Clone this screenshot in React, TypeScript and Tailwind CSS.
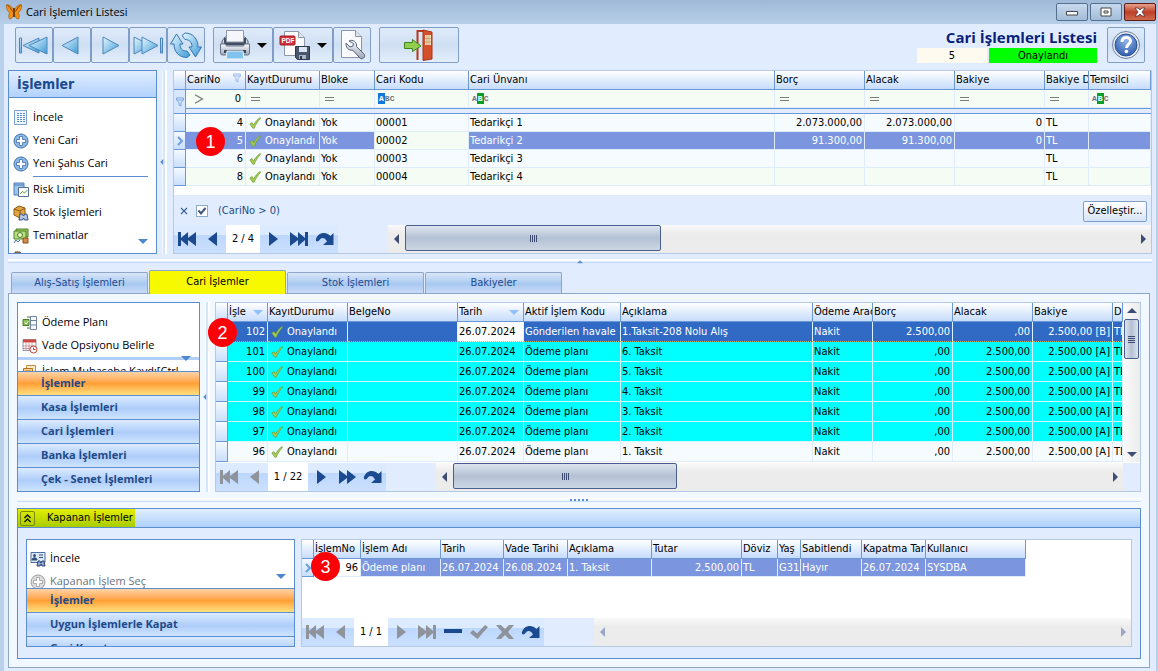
import { ReactNode, useState } from 'react';
import clsx from 'clsx';

type Align = 'left' | 'right';

interface Column {
  title: string;
  width: string;
  align?: Align;
  mark?: 'sort' | 'filter';
}

/* ---------- data ---------- */

const accountColumns: Column[] = [
  { title: 'CariNo', width: 'w-[60px]', align: 'right', mark: 'filter' },
  { title: 'KayıtDurumu', width: 'w-[74px]' },
  { title: 'Bloke', width: 'w-[55px]' },
  { title: 'Cari Kodu', width: 'w-[94px]' },
  { title: 'Cari Ünvanı', width: 'w-auto' },
  { title: 'Borç', width: 'w-[90px]', align: 'right' },
  { title: 'Alacak', width: 'w-[90px]', align: 'right' },
  { title: 'Bakiye', width: 'w-[90px]', align: 'right' },
  { title: 'Bakiye D', width: 'w-[44px]' },
  { title: 'Temsilci', width: 'w-[62px]' },
];

const accounts = [
  ['4', 'Onaylandı', 'Yok', '00001', 'Tedarikçi 1', '2.073.000,00', '2.073.000,00', '0', 'TL', ''],
  ['5', 'Onaylandı', 'Yok', '00002', 'Tedarikçi 2', '91.300,00', '91.300,00', '0', 'TL', ''],
  ['6', 'Onaylandı', 'Yok', '00003', 'Tedarikçi 3', '', '', '', 'TL', ''],
  ['8', 'Onaylandı', 'Yok', '00004', 'Tedarikçi 4', '', '', '', 'TL', ''],
];

const entryColumns: Column[] = [
  { title: 'İşle', width: 'w-10', align: 'right', mark: 'sort' },
  { title: 'KayıtDurumu', width: 'w-20' },
  { title: 'BelgeNo', width: 'w-[110px]' },
  { title: 'Tarih', width: 'w-[66px]', mark: 'sort' },
  { title: 'Aktif İşlem Kodu', width: 'w-[97px]' },
  { title: 'Açıklama', width: 'w-auto' },
  { title: 'Ödeme Arac', width: 'w-[60px]' },
  { title: 'Borç', width: 'w-20', align: 'right' },
  { title: 'Alacak', width: 'w-20', align: 'right' },
  { title: 'Bakiye', width: 'w-20', align: 'right' },
  { title: 'D', width: 'w-2.5' },
];

const entries = [
  ['102', 'Onaylandı', '', '26.07.2024', 'Gönderilen havale', '1.Taksit-208 Nolu Alış', 'Nakit', '2.500,00', ',00', '2.500,00 [B]', 'TL'],
  ['101', 'Onaylandı', '', '26.07.2024', 'Ödeme planı', '6. Taksit', 'Nakit', ',00', '2.500,00', '2.500,00 [A]', 'TL'],
  ['100', 'Onaylandı', '', '26.07.2024', 'Ödeme planı', '5. Taksit', 'Nakit', ',00', '2.500,00', '2.500,00 [A]', 'TL'],
  ['99', 'Onaylandı', '', '26.07.2024', 'Ödeme planı', '4. Taksit', 'Nakit', ',00', '2.500,00', '2.500,00 [A]', 'TL'],
  ['98', 'Onaylandı', '', '26.07.2024', 'Ödeme planı', '3. Taksit', 'Nakit', ',00', '2.500,00', '2.500,00 [A]', 'TL'],
  ['97', 'Onaylandı', '', '26.07.2024', 'Ödeme planı', '2. Taksit', 'Nakit', ',00', '2.500,00', '2.500,00 [A]', 'TL'],
  ['96', 'Onaylandı', '', '26.07.2024', 'Ödeme planı', '1. Taksit', 'Nakit', ',00', '2.500,00', '2.500,00 [A]', 'TL'],
];

const closedColumns: Column[] = [
  { title: 'İşlemNo', width: 'w-[47px]', align: 'right' },
  { title: 'İşlem Adı', width: 'w-20' },
  { title: 'Tarih', width: 'w-[63px]' },
  { title: 'Vade Tarihi', width: 'w-16' },
  { title: 'Açıklama', width: 'w-[84px]' },
  { title: 'Tutar', width: 'w-[90px]', align: 'right' },
  { title: 'Döviz', width: 'w-9' },
  { title: 'Yaş', width: 'w-[23px]' },
  { title: 'Sabitlendi', width: 'w-[61px]' },
  { title: 'Kapatma Tar', width: 'w-16' },
  { title: 'Kullanıcı', width: 'w-[100px]' },
];

const closed = ['96', 'Ödeme planı', '26.07.2024', '26.08.2024', '1. Taksit', '2.500,00', 'TL', 'G31', 'Hayır', '26.07.2024', 'SYSDBA'];

/* ---------- small icons ---------- */

function Tick() {
  return (
    <svg viewBox="0 0 12 12" className="w-3 h-3 shrink-0">
      <path d="M0.8 7 L3 5.6 L4.6 8 C6.2 5 8.6 2 11.2 0.6 L11.4 1.6 C9 4 6.8 7.4 5.2 11.2 L3.8 11.2 Z" fill="#a5cd52" stroke="#6f9a35" strokeWidth="0.7" />
    </svg>
  );
}

function Funnel({ className }: { className?: string }) {
  return (
    <svg viewBox="0 0 8 10" className={clsx('w-2 h-2.5', className)} fill="#dcebfd" stroke="#7da6dc">
      <path d="M0.6 1h6.8v2L5 5.4V9L3 8V5.4L0.6 3z" />
      <path d="M0.6 3h6.8" />
    </svg>
  );
}

function EqualsMark() {
  return (
    <svg viewBox="0 0 16 10" className="w-4 h-2.5" stroke="#7b7b7b">
      <path d="M4 3.5h9M4 6.5h9" />
    </svg>
  );
}

function GreaterMark() {
  return (
    <svg viewBox="0 0 14 10" className="w-3.5 h-2.5" fill="none" stroke="#7b7b7b" strokeWidth="1.3">
      <path d="M4 0.7l7.500 4.300L4 9.300" />
    </svg>
  );
}

function AbcMark({ active }: { active: 'A' | 'B' }) {
  return (
    <span className="inline-flex items-center pl-0.5 align-middle font-[Liberation_Mono] text-[8px] leading-[11px] font-bold text-gray-500">
      <span className={clsx(active === 'A' && 'bg-[#1177dd] text-white px-px')}>A</span>
      <span className={clsx(active === 'B' && 'bg-[#0a9f28] text-white px-px')}>B</span>
      <span>C</span>
    </span>
  );
}

function Arrow({ dir, className, small }: { dir: 'left' | 'right' | 'up' | 'down'; className?: string; small?: boolean }) {
  const d = {
    left: 'M6 0L1 5L6 10z',
    right: 'M2 0L7 5L2 10z',
    up: 'M0 6L5 1L10 6z',
    down: 'M0 2L5 7L10 2z',
  }[dir];
  const wide = dir === 'up' || dir === 'down';
  const size = small ? 'size-1.5' : wide ? 'w-2.5 h-2' : 'w-2 h-2.5';
  return (
    <svg viewBox={wide ? '0 0 10 8' : '0 0 8 10'} className={clsx('shrink-0', size, className)}>
      <path d={d} fill="currentColor" />
    </svg>
  );
}

const navPaths: Record<string, string> = {
  first: 'M1 1h3v6l7-6v6l8-6v14l-8-6v6l-7-6v6H1z',
  prev: 'M14 1v14L5 8z',
  next: 'M6 1v14l9-7z',
  last: 'M19 1h-3v6L9 1v6L1 1v14l8-6v6l7-6v6h3z',
  forward: 'M2 1l8 6V1l9 7l-9 7V9l-8 6z',
  minus: 'M1 5h18v4H1z',
  check: 'M1 9l3-3l4 3.500L16 1l3 2L8.500 15z',
  cross: 'M1 1h5l4 4l4-4h5l-6 7l6 7h-5l-4-4l-4 4H1l6-7z',
  redo: 'M1 8C3 1 11 0 15.500 5L18.500 2V14H8l4-3.500C10 6 6 6 4.500 9C3.500 11 0 11 1 8z',
};

function NavIcon({ kind }: { kind: string }) {
  return (
    <svg viewBox="0 0 20 16" className="w-5 h-4" fill="currentColor">
      <path d={navPaths[kind]} />
    </svg>
  );
}

function Butterfly() {
  return (
    <svg viewBox="0 0 16 16" className="w-4 h-4">
      <path d="M8 6C6 2 2 0 0.500 0.800C0.300 4.500 1.500 8 4 8.500C2.500 10 2.300 13 3.500 15C6 15 7.500 12 8 10C8.500 12 10 15 12.500 15C13.700 13 13.500 10 12 8.500C14.500 8 15.700 4.500 15.500 0.800C14 0 10 2 8 6z" fill="#f58f14" stroke="#9a5208" strokeWidth="0.600" />
      <path d="M1.500 1.500C3 2 5 4.500 6.500 7.500M14.500 1.500C13 2 11 4.500 9.500 7.500" stroke="#6b3606" fill="none" strokeWidth="0.900" />
      <path d="M8 4v9" stroke="#402004" strokeWidth="1.400" />
    </svg>
  );
}

function Gradients() {
  return (
    <svg className="absolute w-0 h-0" aria-hidden="true">
      <defs>
        <linearGradient id="sky" x1="0" y1="0" x2="1" y2="1">
          <stop offset="0" stopColor="#e8f7ff" />
          <stop offset="1" stopColor="#3f9bd6" />
        </linearGradient>
        <linearGradient id="silver" x1="0" y1="0" x2="0" y2="1">
          <stop offset="0" stopColor="#fbfcfe" />
          <stop offset="1" stopColor="#9aa4b8" />
        </linearGradient>
        <radialGradient id="help" cx="0.5" cy="0.3" r="0.8">
          <stop offset="0" stopColor="#8fb3ea" />
          <stop offset="1" stopColor="#2453a4" />
        </radialGradient>
      </defs>
    </svg>
  );
}

function BigFirst() {
  return (
    <svg viewBox="0 0 32 32" className="w-8 h-8" fill="url(#sky)" stroke="#4a86bd">
      <path d="M1.500 9h2v15h-2z" />
      <path d="M21 9v15L5 16.500z" />
      <path d="M29 8v17L11 16.500z" />
    </svg>
  );
}

function BigPrev() {
  return (
    <svg viewBox="0 0 32 32" className="w-8 h-8" fill="url(#sky)" stroke="#4a86bd">
      <path d="M22 8v17L6 16.500z" />
    </svg>
  );
}

function BigNext() {
  return (
    <svg viewBox="0 0 32 32" className="w-8 h-8" fill="url(#sky)" stroke="#4a86bd">
      <path d="M9 8v17l16-8.500z" />
    </svg>
  );
}

function BigLast() {
  return (
    <svg viewBox="0 0 32 32" className="w-8 h-8" fill="url(#sky)" stroke="#4a86bd">
      <path d="M2 8v17l17-8.500z" />
      <path d="M10 8v17l16-8.500z" />
      <path d="M28.500 9h2v15h-2z" />
    </svg>
  );
}

function RefreshIcon() {
  return (
    <svg viewBox="0 0 32 32" className="w-8 h-8" fill="url(#sky)" stroke="#3477b2">
      <path d="M6.500 5L0.500 15H4C4 23 9 28.500 17 28.500l3-2.500l-3-4C12 22.500 10 19 10 15h3z" />
      <path d="M25.500 28l6-10H28C28 10 23 4 15 4l-3 2.500L15 10.500c5 0 7 3.500 7 7.500h-3z" />
    </svg>
  );
}

function PrinterIcon() {
  return (
    <svg viewBox="0 0 32 32" className="w-8 h-8">
      <path d="M3 12l3-4h20l3 4v6H3z" fill="url(#silver)" stroke="#59657c" />
      <path d="M5 9h22v7H5z" fill="#434d62" />
      <path d="M7.500 13V1.500h17V13z" fill="#f4f6fa" stroke="#8f99ab" />
      <path d="M1.500 15h5l1 2h17l1-2h5v9q0 2-2 2h-25q-2 0-2-2z" fill="url(#silver)" stroke="#6a758b" />
      <path d="M5 21h22v3H5z" fill="#3d475c" />
      <path d="M8 22h16l1 8H7z" fill="#82c3ee" stroke="#eef6fd" />
    </svg>
  );
}

function PdfIcon() {
  return (
    <svg viewBox="0 0 32 32" className="w-8 h-8">
      <path d="M5.500 2.500h14l6 6v18h-20z" fill="#fdfdfe" stroke="#8c96a8" />
      <path d="M19.500 2.500v6h6" fill="#dfe4ec" stroke="#8c96a8" />
      <rect x="1" y="7" width="15" height="9" rx="1" fill="#d8303a" stroke="#a01822" />
      <text x="2.500" y="14" fontSize="6.500" fontWeight="bold" fill="#fff" className="font-[Liberation_Sans]">PDF</text>
      <path d="M16.500 17.500h14v13h-12l-2-2z" fill="#4b556c" stroke="#2f384c" />
      <path d="M20 18h8v5h-8z" fill="#dce6f2" />
      <path d="M20 26h7v4h-7z" fill="#a9b4c6" />
      <path d="M21 27h2v3h-2z" fill="#2f384c" />
    </svg>
  );
}

function WrenchPage() {
  return (
    <svg viewBox="0 0 32 32" className="w-8 h-8">
      <path d="M5.500 1.500h14l6 6v21h-20z" fill="#fafbfd" stroke="#8c96a8" />
      <path d="M19.500 1.500v6h6" fill="#dfe4ec" stroke="#8c96a8" />
      <path d="M13 12c4-2 8 1 7.500 5.500l8 8c1 3-2 5-4 4l-8-8.500c-4 1-7-3-6.500-7l4 4l3-1l0.500-2.500z" fill="url(#silver)" stroke="#566077" />
    </svg>
  );
}

function DoorIcon() {
  return (
    <svg viewBox="0 0 32 32" className="w-8 h-8">
      <path d="M14.500 31V2h6" fill="none" stroke="#b8391c" strokeWidth="2" />
      <path d="M20 1l9 2v27l-9 1.500z" fill="#d4502c" stroke="#a83518" />
      <path d="M22 6h6v10h-6z" fill="#f3e4c0" />
      <path d="M24 6v10M26 6v10M22 9.500h6M22 13h6" stroke="#c98c5c" strokeWidth="0.700" />
      <path d="M1.500 13.500h8v-3l8.500 6.500l-8.500 5.500v-3h-8z" fill="#8fcf4d" stroke="#3f8420" />
    </svg>
  );
}

function HelpIcon() {
  return (
    <svg viewBox="0 0 30 30" className="w-[30px] h-[30px]">
      <circle cx="15" cy="15" r="13.500" fill="#e9eef6" stroke="#6f7f9c" />
      <circle cx="15" cy="15" r="11" fill="url(#help)" stroke="#28508f" />
      <path d="M11 12c0-6 8.500-5.500 8.500-1c0 3-4 3.500-4 7" fill="none" stroke="#fff" strokeWidth="3" />
      <circle cx="15.400" cy="21.500" r="1.800" fill="#fff" />
    </svg>
  );
}

/* 16px side menu icons */
const sideIcons: Record<string, ReactNode> = {
  list: (
    <>
      <path d="M1.500 0.500h12v14h-12z" fill="#f1f7fe" stroke="#7ba2cf" />
      <path d="M4 3.500h2M7 3.500h2M10 3.500h2M4 5.500h2M7 5.500h2M10 5.500h2M4 7.500h2M7 7.500h2M10 7.500h2M4 9.500h2M7 9.500h2M10 9.500h2M4 11.500h2M7 11.500h2M10 11.500h2" stroke="#5b8bc4" />
    </>
  ),
  plus: (
    <>
      <circle cx="8" cy="8" r="7" fill="#8cbbe6" stroke="#3d6fa8" />
      <path d="M6.500 3.500h3v3h3v3h-3v3h-3v-3h-3v-3h3z" fill="#fff" stroke="#3d6fa8" strokeWidth="0.800" />
    </>
  ),
  plusOff: (
    <>
      <circle cx="8" cy="8" r="7" fill="#dcdcdc" stroke="#9c9c9c" />
      <path d="M6.500 3.500h3v3h3v3h-3v3h-3v-3h-3v-3h3z" fill="#fff" stroke="#9c9c9c" strokeWidth="0.800" />
    </>
  ),
  risk: (
    <>
      <path d="M1 1h10v12H1z" fill="#9cc4ec" stroke="#4c7fb8" />
      <path d="M1 3h10" stroke="#4c7fb8" />
      <path d="M5.500 5.500h10v9h-10z" fill="#fff" stroke="#53719b" />
      <path d="M7 12l2.500-2.500l2 1.500l3-3" fill="none" stroke="#4d9a3a" />
    </>
  ),
  stock: (
    <>
      <path d="M1 4l5-3l6 2v7l-5 3l-6-3z" fill="#e2a540" stroke="#8b5c17" />
      <path d="M1 4l6 2l5-3M7 6v6" fill="none" stroke="#8b5c17" />
      <path d="M6 15l1-6h2l1.500 2l1.500-2h2l1 6h-3.500l-1-2l-1 2z" fill="#b7c6e4" stroke="#3c5182" />
    </>
  ),
  money: (
    <>
      <path d="M3 1h12v8H3z" fill="#9ccf5c" stroke="#4c7f26" />
      <path d="M1 3h12v8H1z" fill="#b8df7e" stroke="#4c7f26" />
      <circle cx="7" cy="7" r="2.500" fill="#e8f5cc" stroke="#4c7f26" />
      <path d="M10 10h5v5h-5z" fill="#d98b4a" stroke="#8a4f1d" />
      <path d="M1 15l2-3l2 2l2-2" fill="none" stroke="#3f69b0" />
    </>
  ),
  box: <path d="M2 1h5l2 4h5v10H2z" fill="#b07c4a" stroke="#6a4320" />,
  plan: (
    <>
      <path d="M1 4.500h6v6H1z" fill="#8cc45a" stroke="#4a7d2a" />
      <path d="M2.500 7.500l1.500 1.500l2.500-3" fill="none" stroke="#fff" />
      <path d="M5 2h3M5 13h3" stroke="#4a7d2a" />
      <path d="M8.500 1.500h6v13h-6zM8.500 5.500h6M8.500 10h6" fill="#f5f8fc" stroke="#7286a4" />
    </>
  ),
  calendar: (
    <>
      <path d="M1 1.500h13v11H1z" fill="#fff" stroke="#8c99ae" />
      <path d="M1 1.500h13v3H1z" fill="#cf4a3c" />
      <path d="M4 5v7M7 5v7M10 5v7M1 8h13M1 10.500h13" stroke="#b9747a" strokeWidth="0.700" />
      <circle cx="11.500" cy="11.500" r="3.500" fill="#fff" stroke="#b8443c" />
      <path d="M11.500 9.500v2h2" fill="none" stroke="#b8443c" />
    </>
  ),
  ledger: (
    <>
      <path d="M4.500 1.500h9v9h-9z" fill="#fbe9cd" stroke="#c08a3c" />
      <path d="M1.500 4.500h9v10h-9z" fill="#f6cf8e" stroke="#b3761f" />
      <path d="M3 7h6M3 9h6" stroke="#b3761f" />
    </>
  ),
  people: (
    <>
      <path d="M1 1.500h14v10H1z" fill="#dce8f7" stroke="#4e6fa3" />
      <circle cx="4.500" cy="4.500" r="1.500" fill="#33507f" />
      <path d="M2 9c0-3 5-3 5 0zM9 4h4M9 6.500h4" fill="#33507f" stroke="#33507f" />
      <path d="M7 15l1-5h2l1 2l1-2h2l1 5h-3l-1-2l-1 2z" fill="#8fa4cc" stroke="#2f4676" />
    </>
  ),
};

/* ---------- building blocks ---------- */

function ToolButton({ label, width, menu, children }: { label: string; width: string; menu?: boolean; children: ReactNode }) {
  return (
    <button
      aria-label={label}
      className={clsx(
        'h-9 flex items-center justify-center gap-1.5 rounded-xs border border-[#7f9dc6] bg-linear-to-b from-[#dfebfa] via-[#cfdff2] to-[#e2eefd]',
        width,
      )}
    >
      {children}
      {menu && <Arrow dir="down" className="text-black" />}
    </button>
  );
}

function SideItem({ icon, label, disabled }: { icon: string; label: string; disabled?: boolean }) {
  return (
    <a href="#" className={clsx('flex items-center h-[23px] shrink-0 gap-1 whitespace-nowrap font-[Open_Sans] text-[11px]', disabled ? 'text-gray-500' : 'text-black')}>
      <svg viewBox="0 0 16 16" className="w-4 h-4 shrink-0">{sideIcons[icon]}</svg>
      {label}
    </a>
  );
}

function GroupButton({ label, active }: { label: string; active?: boolean }) {
  return (
    <button
      className={clsx(
        'h-6 shrink-0 w-full border-t border-[#5b8ed0] pl-[23px] text-left font-[Open_Sans] text-[11px] font-bold text-[#1f4a87] bg-linear-to-b',
        active ? 'from-[#ffd3a5] from-0% via-[#ff9f35] via-50% to-[#ffe07d]' : 'from-[#dcebff] from-0% via-[#adcdf9] via-55% to-[#cfe4ff]',
      )}
    >
      {label}
    </button>
  );
}

function Badge({ value, className }: { value: number; className: string }) {
  return (
    <span className={clsx('absolute z-10 flex size-[29px] items-center justify-center rounded-full bg-[#fb0007] font-[Liberation_Sans] text-lg text-white', className)}>
      {value}
    </span>
  );
}

function HeadRow({ columns }: { columns: Column[] }) {
  return (
    <tr className="h-[19px]">
      <th className="w-3 p-0 border-r border-b border-[#6c99d6] bg-linear-to-b from-white to-[#c6dcfc]" />
      {columns.map((c) => (
        <th key={c.title} className={clsx('p-0 border-r border-b border-[#6c99d6] bg-linear-to-b from-white to-[#c6dcfc] text-left font-normal', c.width)}>
          <div className="flex items-center justify-between h-[18px] pl-px overflow-hidden whitespace-nowrap">
            {c.title}
            {c.mark === 'sort' && <Arrow dir="down" className="mr-1 text-[#8fc0fa]" />}
            {c.mark === 'filter' && <Funnel className="mr-1 mb-1 shrink-0 opacity-70" />}
          </div>
        </th>
      ))}
    </tr>
  );
}

function RowMark({ current }: { current?: boolean }) {
  return (
    <td className="p-0 border-r border-b border-[#6c99d6] bg-linear-to-b from-[#f4f9ff] to-[#c9dffc]">
      {current && (
        <svg viewBox="0 0 8 10" className="w-2 h-2.5 mx-auto" fill="none" stroke="#6a9fe2" strokeWidth="2">
          <path d="M2 1l4 4l-4 4" />
        </svg>
      )}
    </td>
  );
}

function ScrollBar({ thumb, disabled }: { thumb?: string; disabled?: boolean }) {
  const tone = disabled ? 'text-[#99a6c6]' : 'text-[#3e4c73]';
  return (
    <div className="flex flex-1 items-stretch bg-linear-to-b from-[#fafafa] to-[#ececec] to-30%">
      <span className="flex w-[17px] items-center justify-center"><Arrow dir="left" className={tone} /></span>
      <div className="flex-1">
        {thumb && (
          <div className={clsx('h-[26px] flex items-center justify-center gap-px rounded-xs border border-[#4a5f8f] bg-linear-to-b from-[#dde4ee] via-[#b4c1d4] to-[#ccd6e3]', thumb)}>
            {[0, 1, 2, 3].map((i) => <i key={i} className="w-px h-[7px] bg-[#3e4c73]" />)}
          </div>
        )}
      </div>
      <span className="flex w-[17px] items-center justify-center"><Arrow dir="right" className={tone} /></span>
    </div>
  );
}

interface NavigatorProps {
  page: string;
  pageWidth: string;
  before: string[];
  after: string[];
  off?: string[];
  thumb?: string;
  disabled?: boolean;
}

function Navigator({ page, pageWidth, before, after, off = [], thumb, disabled }: NavigatorProps) {
  const button = (kind: string) => (
    <button
      key={kind}
      aria-label={kind}
      className={clsx(
        'w-[26px] flex items-center justify-center bg-linear-to-b from-[#dcebff] from-35% via-[#bcd7fd] via-35% to-[#cbe0fd]',
        off.includes(kind) ? 'text-[#8f949c]' : 'text-[#1b4a8f]',
      )}
    >
      <NavIcon kind={kind} />
    </button>
  );
  return (
    <div className="flex h-7 shrink-0 bg-[#e1edfe]">
      {before.map(button)}
      <span className={clsx('flex items-center justify-center bg-white', pageWidth)}>{page}</span>
      {after.map(button)}
      <span className="w-[50px]" />
      <ScrollBar thumb={thumb} disabled={disabled} />
    </div>
  );
}

function VSash() {
  return (
    <div className="flex w-[5px] shrink-0 items-center border-l border-[#f4f9ff] border-r-2 border-r-white bg-[#d3e6fc]">
      <Arrow dir="left" small className="-ml-1 text-[#5b8ed0]" />
    </div>
  );
}

/* ---------- sections ---------- */

function TitleBar() {
  return (
    <header className="flex h-6 shrink-0 items-center bg-linear-to-b from-[#9fb9d7] to-[#b7cfe9] pl-1.5 pr-0.5 font-[Open_Sans] text-[11px]">
      <Butterfly />
      <h1 className="pl-1 flex-1 text-black">Cari İşlemleri Listesi</h1>
      <div className="flex gap-0.5">
        <button aria-label="Simge durumuna küçült" className="flex w-8 h-[18px] items-center justify-center rounded-xs border border-[#54708f] bg-linear-to-b from-[#c8daee] to-[#a3bcd8]">
          <svg viewBox="0 0 12 10" className="w-3 h-2.5"><path d="M0.500 4.500h11v3.500h-11z" fill="#fff" stroke="#444" /></svg>
        </button>
        <button aria-label="Ekranı kapla" className="flex w-8 h-[18px] items-center justify-center rounded-xs border border-[#54708f] bg-linear-to-b from-[#c8daee] to-[#a3bcd8]">
          <svg viewBox="0 0 12 10" className="w-3 h-2.5"><path d="M1 1h10v8H1zM4 4h4v2H4z" fill="#fff" stroke="#444" /></svg>
        </button>
        <button aria-label="Kapat" className="flex w-8 h-[18px] items-center justify-center rounded-xs border border-[#5c1a14] bg-linear-to-b from-[#e6a08e] via-[#bf3d27] to-[#cf6a4c]">
          <svg viewBox="0 0 12 10" className="w-3 h-2.5"><path d="M1 1h3l2 2l2-2h3L8 5l3 4H8L6 7L4 9H1l3-4z" fill="#fff" stroke="#4b3030" strokeWidth="0.800" /></svg>
        </button>
      </div>
    </header>
  );
}

function Toolbar() {
  return (
    <div className="flex items-start px-[7px] pt-[3px] pb-[7px]">
      <div className="flex">
        <ToolButton label="İlk kayıt" width="w-[38px]"><BigFirst /></ToolButton>
        <ToolButton label="Önceki kayıt" width="w-[38px]"><BigPrev /></ToolButton>
        <ToolButton label="Sonraki kayıt" width="w-[38px]"><BigNext /></ToolButton>
        <ToolButton label="Son kayıt" width="w-[38px]"><BigLast /></ToolButton>
        <ToolButton label="Yenile" width="w-[38px]"><RefreshIcon /></ToolButton>
      </div>
      <div className="flex ml-2">
        <ToolButton label="Yazdır" width="w-[60px]" menu><PrinterIcon /></ToolButton>
        <ToolButton label="PDF kaydet" width="w-[60px]" menu><PdfIcon /></ToolButton>
        <ToolButton label="Ayarlar" width="w-[38px]"><WrenchPage /></ToolButton>
      </div>
      <div className="flex ml-2">
        <ToolButton label="Çıkış" width="w-20"><DoorIcon /></ToolButton>
      </div>
      <div className="ml-auto mr-2.5 text-right">
        <h2 className="font-[Open_Sans] text-[15px] leading-[21px] font-bold text-[#0a1f7a]">Cari İşlemleri Listesi</h2>
        <div className="flex gap-0.5 text-center leading-[15px]">
          <span className="w-[70px] bg-[#fffaf0]">5</span>
          <span className="w-[108px] bg-[#00ff00]">Onaylandı</span>
        </div>
      </div>
      <ToolButton label="Yardım" width="w-[38px]"><HelpIcon /></ToolButton>
    </div>
  );
}

function AccountGrid() {
  const [filterOn, setFilterOn] = useState(true);
  const cell = 'pl-px pr-0.5 pb-0 border-r border-b border-[#e0ebfb] overflow-hidden whitespace-nowrap';
  const equals = <EqualsMark />;
  const filters = [
    <span className="flex items-center justify-between pl-1 pr-0.5"><GreaterMark />0</span>,
    equals,
    equals,
    <AbcMark active="A" />,
    <AbcMark active="B" />,
    equals,
    equals,
    equals,
    equals,
    <AbcMark active="B" />,
  ];
  return (
    <div className="relative flex min-w-0 flex-1 flex-col border border-[#b5c9e4] bg-white">
      <table className="w-full table-fixed border-separate border-spacing-0 leading-4">
        <thead>
          <HeadRow columns={accountColumns} />
          <tr className="h-[18px] bg-[#f5fcf4]">
            <td rowSpan={2} className="p-0 border-r border-b border-[#6c99d6] bg-[#d5e6fd]"><Funnel className="mx-auto" /></td>
            {filters.map((f, i) => <td key={i} className={clsx(cell, i > 0 && 'pl-0.5')}>{f}</td>)}
          </tr>
          <tr className="h-1.5">
            <td colSpan={10} className="p-0 border-y border-[#6c99d6] bg-[#e1edfe]" />
          </tr>
        </thead>
        <tbody>
          {accounts.map((row, r) => {
            const current = r === 1;
            return (
              <tr key={row[0]} className={r % 2 ? 'bg-[#f5fcf4]' : 'bg-[#f5fbff]'}>
                <RowMark current={current} />
                {row.map((v, c) => (
                  <td key={c} className={clsx(cell, 'pt-px', accountColumns[c].align === 'right' && 'text-right', current && c !== 3 && 'bg-[#7b96de] text-white')}>
                    {c === 1 ? <span className="flex items-center gap-1 pl-0.5"><Tick />{v}</span> : v}
                  </td>
                ))}
              </tr>
            );
          })}
        </tbody>
      </table>
      <div className="mt-auto flex h-[30px] items-center bg-[#e1edfe] pt-0.5 pl-1.5 pr-1 text-[#1f4a87]">
        <button aria-label="Filtreyi temizle" className="flex w-3">
          <svg viewBox="0 0 8 8" className="size-2" stroke="#3f66a3" strokeWidth="1.2"><path d="M1 1l6 6M7 1L1 7" /></svg>
        </button>
        <label className="flex items-center">
          <span className="relative ml-1 mr-2.5 flex size-3">
            <input type="checkbox" checked={filterOn} onChange={() => setFilterOn(!filterOn)} className="appearance-none size-3 border border-[#8eaacb] bg-white" />
            {filterOn && (
              <svg viewBox="0 0 12 12" className="absolute inset-0 size-3" fill="none" stroke="#41557d" strokeWidth="2">
                <path d="M2.500 5.500l2.500 3L9.500 3" />
              </svg>
            )}
          </span>
          (CariNo &gt; 0)
        </label>
        <button className="ml-auto h-[21px] w-16 rounded-xs border border-[#7f9dc6] bg-linear-to-b from-white to-[#d6e4f7] text-black">Özelleştir...</button>
      </div>
      <Navigator page="2 / 4" pageWidth="w-[34px]" before={['first', 'prev']} after={['next', 'last', 'redo']} thumb="w-64" />
      <Badge value={1} className="left-[22px] top-14" />
    </div>
  );
}

function EntryGrid() {
  return (
    <div className="relative flex min-w-0 flex-1 flex-col border border-[#b5c9e4] bg-white">
      <div className="flex">
        <div className="min-w-0 flex-1">
          <table className="w-full table-fixed border-separate border-spacing-0 leading-[18px]">
            <thead><HeadRow columns={entryColumns} /></thead>
            <tbody>
              {entries.map((row, r) => {
                const current = r === 0;
                const last = r === entries.length - 1;
                return (
                  <tr key={row[0]} className={clsx(current ? 'bg-[#316ac5] text-white' : last ? 'bg-[#f5fbff]' : 'bg-[#00ffff]')}>
                    <RowMark />
                    {row.map((v, c) => (
                      <td
                        key={c}
                        className={clsx(
                          'pt-px pb-0 pl-px pr-0.5 border-r border-b overflow-hidden whitespace-nowrap',
                          last ? 'border-[#e0ebfb]' : 'border-[#d9f4ff]',
                          current && 'border-b-[#d9a860] [border-bottom-style:dotted]',
                          current && c === 3 && 'bg-white text-black',
                          entryColumns[c].align === 'right' && 'text-right',
                        )}
                      >
                        {c === 1 ? <span className="flex items-center gap-1 pl-0.5"><Tick />{v}</span> : v}
                      </td>
                    ))}
                  </tr>
                );
              })}
            </tbody>
          </table>
        </div>
        <div className="flex w-[17px] shrink-0 flex-col items-center bg-linear-to-r from-[#fafafa] to-[#ececec] py-1">
          <Arrow dir="up" className="text-[#3e4c73]" />
          <div className="mt-1 flex h-10 w-[15px] flex-col items-center justify-center gap-px rounded-xs border border-[#4a5f8f] bg-linear-to-r from-[#dde4ee] via-[#b4c1d4] to-[#dde4ee]">
            {[0, 1, 2, 3].map((i) => <i key={i} className="h-px w-[7px] bg-[#3e4c73]" />)}
          </div>
          <Arrow dir="down" className="mt-auto text-[#3e4c73]" />
        </div>
      </div>
      <div className="mt-auto bg-[#e1edfe] pr-[17px]">
        <Navigator page="1 / 22" pageWidth="w-10" before={['first', 'prev']} after={['next', 'forward', 'redo']} off={['first', 'prev']} thumb="w-56" />
      </div>
      <Badge value={2} className="-left-2 top-[15px]" />
    </div>
  );
}

function ClosedGrid() {
  return (
    <div className="relative flex min-w-0 flex-1 flex-col border border-[#b5c9e4] bg-white">
      <table className="w-[724px] table-fixed border-separate border-spacing-0 leading-4">
        <thead><HeadRow columns={closedColumns} /></thead>
        <tbody>
          <tr>
            <RowMark current />
            {closed.map((v, c) => (
              <td key={c} className={clsx('pt-px pb-0 pl-px pr-0.5 border-r border-b border-[#e0ebfb] overflow-hidden whitespace-nowrap', closedColumns[c].align === 'right' && 'text-right', c > 0 && 'bg-[#7b96de] text-white')}>
                {v}
              </td>
            ))}
          </tr>
        </tbody>
      </table>
      <div className="mt-auto">
        <Navigator
          page="1 / 1"
          pageWidth="w-[34px]"
          before={['first', 'prev']}
          after={['next', 'last', 'minus', 'check', 'cross', 'redo']}
          off={['first', 'prev', 'next', 'last', 'check', 'cross']}
          disabled
        />
      </div>
      <Badge value={3} className="left-[9px] top-3" />
    </div>
  );
}

const tabs = ['Alış-Satış İşlemleri', 'Cari İşlemler', 'Stok İşlemleri', 'Bakiyeler'];

export default function App() {
  return (
    <div className="flex min-h-screen flex-col bg-[#b9d1ea] font-['DejaVu_Sans_Condensed','DejaVu_Sans',sans-serif] text-[11px] text-black cursor-default">
      <Gradients />
      <TitleBar />
      <div className="ml-1 mr-0.5 flex flex-1 flex-col bg-[#e1edfe] px-1 pb-[3px]">
        <Toolbar />

        <section className="flex h-[184px]">
          <aside className="flex w-[149px] shrink-0 flex-col overflow-hidden border border-[#5b8ed0] bg-white">
            <h3 className="h-[27px] shrink-0 border-b border-[#5b8ed0] bg-linear-to-b from-[#e1eeff] to-[#b2d2fd] pl-2 text-sm leading-[26px] font-bold text-[#1b4a8f]">İşlemler</h3>
            <nav className="relative flex flex-col overflow-hidden pl-1 pt-2">
              <SideItem icon="list" label="İncele" />
              <SideItem icon="plus" label="Yeni Cari" />
              <SideItem icon="plus" label="Yeni Şahıs Cari" />
              <hr className="my-px ml-5 mr-2 border-[#5b8ed0]" />
              <SideItem icon="risk" label="Risk Limiti" />
              <SideItem icon="stock" label="Stok İşlemleri" />
              <SideItem icon="money" label="Teminatlar" />
              <SideItem icon="box" label="" />
              <Arrow dir="down" className="absolute right-2 bottom-2 text-[#4f86cc]" />
            </nav>
          </aside>
          <div className="flex pl-[5px] pr-1.5"><VSash /></div>
          <AccountGrid />
        </section>

        <div className="mt-[5px] flex h-1 shrink-0 items-center justify-center border-t-2 border-white border-b border-b-[#c4dcfa]">
          <Arrow dir="up" small className="text-[#5b8ed0]" />
        </div>

        <div className="mt-[7px] flex h-[23px] shrink-0 items-end gap-px pl-[3px]">
          {tabs.map((t, i) => (
            <button
              key={t}
              className={clsx(
                'w-[137px] rounded-t-xs border border-b-0 border-[#8fa6c8]',
                i === 1 ? 'z-10 -mb-px h-6 bg-[#f6f900] text-black' : 'h-[21px] bg-linear-to-b from-[#d9e6f9] via-[#a9c8f0] via-55% to-[#c8dcf8] text-[#1f4a8f]',
              )}
            >
              {t}
            </button>
          ))}
        </div>

        <main className="mr-0.5 flex flex-1 flex-col border border-[#8fa6c8] bg-[#f2f8ff] px-2 pt-2 pb-2">
          <section className="flex h-[190px]">
            <aside className="flex w-[183px] shrink-0 flex-col overflow-hidden border border-[#5b8ed0] bg-white">
              <nav className="relative flex flex-1 flex-col overflow-hidden pl-1 pt-2">
                <SideItem icon="plan" label="Ödeme Planı" />
                <SideItem icon="calendar" label="Vade Opsiyonu Belirle" />
                <hr className="-ml-1 h-[3px] shrink-0 border-0 bg-[#b0d0fa]" />
                <SideItem icon="ledger" label="İşlem Muhasebe Kaydı[Ctrl" />
                <Arrow dir="down" className="absolute right-2 top-[51px] text-[#4f86cc]" />
              </nav>
              <GroupButton label="İşlemler" active />
              <GroupButton label="Kasa İşlemleri" />
              <GroupButton label="Cari İşlemleri" />
              <GroupButton label="Banka İşlemleri" />
              <GroupButton label="Çek - Senet İşlemleri" />
            </aside>
            <div className="flex px-[5px]"><VSash /></div>
            <EntryGrid />
          </section>

          <div className="mt-1.5 flex h-1 shrink-0 items-center justify-center gap-0.5 border-t border-white border-b border-b-[#c4dcfa]">
            {[0, 1, 2, 3, 4].map((i) => <i key={i} className="size-0.5 bg-[#5b8ed0]" />)}
          </div>

          <section className="mt-1.5 flex-1 border border-[#5b8ed0] bg-[#e1edfe]">
            <div className="flex h-[19px] border-b border-[#5b8ed0] bg-linear-to-b from-[#e1eeff] to-[#aed0fd]">
              <button className="flex w-[117px] items-center gap-3 bg-linear-to-b from-[#e2ee00] to-[#a8cc00] pl-0.5 whitespace-nowrap">
                <svg viewBox="0 0 15 15" className="size-[15px] shrink-0" fill="none" stroke="#111">
                  <rect x="0.500" y="0.500" width="14" height="14" rx="1.500" stroke="#7d8a10" />
                  <path d="M4.500 7l3-3l3 3M4.500 11l3-3l3 3" strokeWidth="1.400" />
                </svg>
                Kapanan İşlemler
              </button>
            </div>
            <div className="flex h-[130px] gap-1.5 px-2 py-[11px]">
              <aside className="flex w-[269px] shrink-0 flex-col overflow-hidden border border-[#5b8ed0] bg-white">
                <nav className="relative flex h-12 shrink-0 flex-col overflow-hidden pl-[3px] pt-[7px]">
                  <SideItem icon="people" label="İncele" />
                  <SideItem icon="plusOff" label="Kapanan İşlem Seç" disabled />
                  <Arrow dir="down" className="absolute right-2 bottom-2 text-[#4f86cc]" />
                </nav>
                <GroupButton label="İşlemler" active />
                <GroupButton label="Uygun İşlemlerle Kapat" />
                <GroupButton label="Geri Kapat" />
              </aside>
              <ClosedGrid />
            </div>
          </section>
        </main>
      </div>
    </div>
  );
}
